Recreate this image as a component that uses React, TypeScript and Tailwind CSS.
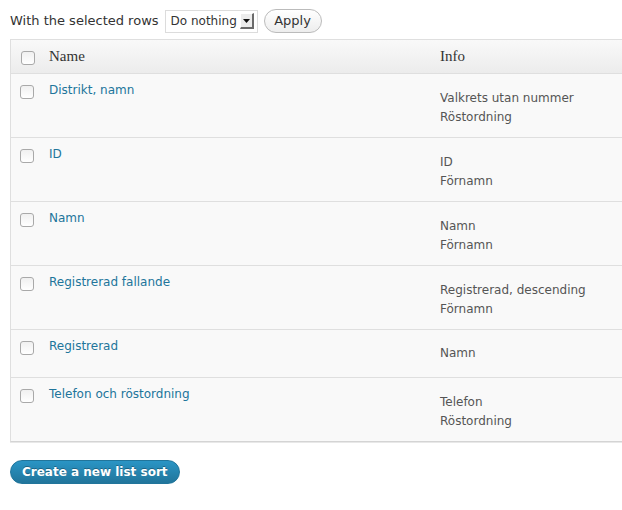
import React from "react";

const rows = [
  { name: "Distrikt, namn", info: ["Valkrets utan nummer", "Röstordning"] },
  { name: "ID", info: ["ID", "Förnamn"] },
  { name: "Namn", info: ["Namn", "Förnamn"] },
  { name: "Registrerad fallande", info: ["Registrerad, descending", "Förnamn"] },
  { name: "Registrerad", info: ["Namn"] },
  { name: "Telefon och röstordning", info: ["Telefon", "Röstordning"] },
];

const Checkbox = () => (
  <span className="block h-[14px] w-[14px] rounded-[3px] border border-[#a9a9a9] bg-gradient-to-b from-[#f0f0f0] to-white" />
);

const App = () => {
  return (
    <div className="h-[510px] w-screen overflow-hidden bg-white px-[10px] pt-[9px] font-['DejaVu_Sans',sans-serif] text-[13px] text-[#333]">
      {/* bulk actions */}
      <div className="flex h-[24px] items-center">
        <span>With the selected rows</span>
        <div className="ml-[6px] flex h-[23px] w-[93px] items-center border border-[#dcdcdc] bg-white pl-[5px] pr-[3px]">
          <span className="flex-1 whitespace-nowrap text-[12px] leading-none">Do nothing</span>
          <span className="flex h-[16px] w-[14px] shrink-0 items-center justify-center border-b-2 border-l border-r-2 border-t border-[#6b6b6b] border-l-white border-t-white bg-[#ececec]">
            <svg width="7" height="4" viewBox="0 0 7 4">
              <path d="M0 0h7L3.5 4z" fill="#111" />
            </svg>
          </span>
        </div>
        <button className="ml-[6px] h-[24px] w-[58px] rounded-full border border-[#bbb] bg-gradient-to-b from-white to-[#ededed] text-[13px] text-[#333]">
          Apply
        </button>
      </div>

      {/* table */}
      <div className="mt-[6px] w-[660px] border border-[#dfdfdf] border-b-[#d4d4d4] shadow-[0_1px_0_#e8e8e8]">
        <div className="grid h-[34px] grid-cols-[29px_391px_1fr] items-center border-b border-[#dfdfdf] bg-gradient-to-b from-[#f9f9f9] to-[#ececec] font-['Liberation_Serif',serif] text-[15px] text-[#333]">
          <div className="pl-[10px] pt-[2px]">
            <Checkbox />
          </div>
          <div className="pl-[9px]">Name</div>
          <div className="pl-[9px]">Info</div>
        </div>
        {rows.map((r, i) => (
          <div
            key={r.name}
            className={
              "grid min-h-[48px] grid-cols-[29px_391px_1fr] bg-[#f9f9f9] text-[12px] " +
              (i > 0 ? "border-t border-[#dfdfdf]" : "")
            }
          >
            <div className="pl-[9px] pt-[11px]">
              <Checkbox />
            </div>
            <div className="pl-[9px] pt-[7px] leading-[18px] text-[#21759b]">{r.name}</div>
            <div
              className={
                "flex flex-col justify-center pl-[9px] leading-[19px] text-[#555] " +
                (r.info.length > 1 ? "pb-[10px] pt-[15px]" : "py-[12px]")
              }
            >
              {r.info.map((t) => (
                <span key={t}>{t}</span>
              ))}
            </div>
          </div>
        ))}
      </div>

      <button className="mt-[18px] h-[24px] rounded-full border border-[#21759b] bg-gradient-to-b from-[#2a95c5] to-[#21759b] px-[11px] text-[12px] font-bold text-white [text-shadow:0_-1px_0_rgba(0,0,0,0.3)]">
        Create a new list sort
      </button>
    </div>
  );
};

export default App;
